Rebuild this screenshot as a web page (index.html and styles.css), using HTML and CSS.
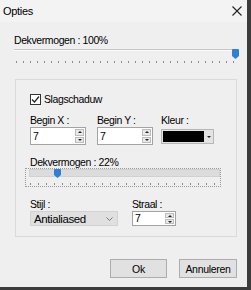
FILE: index.html
```html
<!DOCTYPE html>
<html lang="nl">
<head>
    <meta charset="UTF-8">
    <title>Opties</title>
    <link rel="stylesheet" href="styles.css">
</head>
<body>
    <div class="window">
        <div class="titlebar">
            <span>Opties</span>
            <svg class="close" width="10" height="10" viewBox="0 0 10 10">
                <path d="M0.5 0.5L9.5 9.5M9.5 0.5L0.5 9.5" stroke="#222" stroke-width="1.1"/>
            </svg>
        </div>
        <div class="content">
            <div class="label">Dekvermogen : 100%</div>
            <div class="slider-main">
                <div class="line"></div>
                <svg class="thumb" style="left: 218px" width="7" height="10" viewBox="0 0 7 10">
                    <path d="M0 1Q0 0 1 0H6Q7 0 7 1V7L3.5 10L0 7Z" fill="#2f7fd4"/>
                </svg>
                <div class="ticks"></div>
            </div>

            <div class="group">
                <div class="check-row">
                    <span class="checkbox">
                        <svg width="9" height="9" viewBox="0 0 9 9">
                            <path d="M1 4.5L3.5 7L8 1.5" stroke="#222" stroke-width="1.2" fill="none"/>
                        </svg>
                    </span>
                    <span>Slagschaduw</span>
                </div>

                <div class="fields">
                    <div class="field">
                        <div class="label">Begin X :</div>
                        <div class="spin">
                            <span class="spin-value">7</span>
                            <span class="spin-btns"><span class="up"></span><span class="down"></span></span>
                        </div>
                    </div>
                    <div class="field">
                        <div class="label">Begin Y :</div>
                        <div class="spin">
                            <span class="spin-value">7</span>
                            <span class="spin-btns"><span class="up"></span><span class="down"></span></span>
                        </div>
                    </div>
                    <div class="field">
                        <div class="label">Kleur :</div>
                        <div class="color-combo">
                            <span class="swatch"></span>
                            <span class="drop"></span>
                        </div>
                    </div>
                </div>

                <div class="label label-opacity">Dekvermogen : 22%</div>
                <div class="slider-inner">
                    <div class="bar"></div>
                    <svg class="thumb" style="left: 28px" width="7" height="9" viewBox="0 0 7 9">
                        <path d="M0 1Q0 0 1 0H6Q7 0 7 1V6L3.5 9L0 6Z" fill="#2f7fd4"/>
                    </svg>
                    <div class="ticks"></div>
                </div>

                <div class="fields fields-bottom">
                    <div class="field">
                        <div class="label">Stijl :</div>
                        <div class="select">
                            <span>Antialiased</span>
                            <svg width="7" height="4" viewBox="0 0 7 4">
                                <path d="M0.5 0.5L3.5 3.5L6.5 0.5" stroke="#777" fill="none"/>
                            </svg>
                        </div>
                    </div>
                    <div class="field">
                        <div class="label">Straal :</div>
                        <div class="spin spin-small">
                            <span class="spin-value">7</span>
                            <span class="spin-btns"><span class="up"></span><span class="down"></span></span>
                        </div>
                    </div>
                </div>
            </div>
        </div>

        <div class="buttons">
            <button class="btn btn-ok">Ok</button>
            <button class="btn btn-cancel">Annuleren</button>
        </div>
    </div>
</body>
</html>
```

FILE: styles.css
```css
* {
    margin: 0;
    padding: 0;
    box-sizing: border-box;
}
body {
    background: #3c3c3c;
    font-family: "Liberation Sans", Arial, sans-serif;
    font-size: 10.5px;
    letter-spacing: -0.4px;
    color: #000;
}
.window {
    width: 247px;
    height: 287px;
    background: #efefef;
    display: flex;
    flex-direction: column;
}
.titlebar {
    height: 22px;
    background: #f3f3f3;
    display: flex;
    align-items: center;
    justify-content: space-between;
    padding: 0 5px 0 3px;
    font-size: 11px;
    letter-spacing: -0.3px;
}
.content {
    padding: 12px 0 0 14px;
}
.label {
    height: 13px;
    line-height: 13px;
    white-space: nowrap;
}
.slider-main {
    position: relative;
    width: 224px;
    height: 16px;
}
.slider-main .line {
    margin-top: 2px;
    height: 2px;
    background: #c6c6c6;
    border-bottom: 1px solid #fbfbfb;
}
.thumb {
    position: absolute;
    top: 0;
}
.slider-main .ticks {
    margin: 10px 0 0 2px;
    width: 221px;
    height: 2px;
    background: repeating-linear-gradient(90deg, #8c8c8c 0 1px, transparent 1px 7px);
}
.group {
    margin: 14px 0 0 1px;
    width: 222px;
    height: 158px;
    border: 1px solid #dadada;
    padding: 13px 0 0 14px;
}
.check-row {
    height: 12px;
    display: flex;
    align-items: center;
    gap: 3px;
}
.checkbox {
    width: 11px;
    height: 11px;
    border: 1px solid #333;
    background: #fff;
    display: flex;
    align-items: center;
    justify-content: center;
}
.fields {
    margin-top: 9px;
    display: grid;
    grid-template-columns: 67px 64px 53px;
}
.field .label {
    height: 13px;
}
.spin {
    width: 56px;
    height: 18px;
    border: 1px solid #a3a3a3;
    background: #fff;
    display: flex;
}
.spin-value {
    flex: 1;
    padding-left: 2px;
    line-height: 16px;
}
.spin-btns {
    width: 9px;
    margin: 1px 1px 1px 0;
    display: flex;
    flex-direction: column;
    gap: 1px;
}
.spin-btns span {
    flex: 1;
    border: 1px solid #bdbdbd;
    background: #e9e9e9;
    display: flex;
    align-items: center;
    justify-content: center;
}
.spin-btns .up::after {
    content: "";
    border-left: 2px solid transparent;
    border-right: 2px solid transparent;
    border-bottom: 2px solid #222;
}
.spin-btns .down::after {
    content: "";
    border-left: 2px solid transparent;
    border-right: 2px solid transparent;
    border-top: 2px solid #222;
}
.color-combo {
    width: 53px;
    height: 15px;
    margin-top: 2px;
    border: 1px solid #b7b7b7;
    background: #e3e3e3;
    display: flex;
}
.swatch {
    flex: 1;
    background: #000;
    margin: 1px;
}
.drop {
    width: 8px;
    display: flex;
    align-items: center;
    justify-content: center;
}
.drop::after {
    content: "";
    border-left: 2px solid transparent;
    border-right: 2px solid transparent;
    border-top: 2px solid #222;
}
.label-opacity {
    margin-top: 11px;
    height: 12px;
    line-height: 12px;
}
.slider-inner {
    position: relative;
    margin-left: -5px;
    width: 196px;
    height: 19px;
    border: 1px dotted #9a9a9a;
}
.slider-inner .bar {
    margin-left: 3px;
    width: 191px;
    height: 8px;
    background: #dcdcdc;
    border: 1px solid #d0d0d0;
}
.slider-inner .ticks {
    margin: 6px 0 0 4px;
    width: 186px;
    height: 2px;
    background: repeating-linear-gradient(90deg, #8c8c8c 0 1px, transparent 1px 8px);
}
.fields-bottom {
    margin-top: 11px;
    grid-template-columns: 102px 44px;
}
.select {
    width: 88px;
    height: 15px;
    background: #e0e0e0;
    border: 1px solid #d2d2d2;
    display: flex;
    align-items: center;
    justify-content: space-between;
    padding: 0 4px 0 3px;
    font-size: 11.5px;
}
.spin-small {
    width: 44px;
    height: 15px;
}
.spin-small .spin-value {
    line-height: 13px;
}
.buttons {
    margin-top: 22px;
    display: flex;
    justify-content: flex-end;
    gap: 12px;
    padding-right: 10px;
}
.btn {
    height: 19px;
    background: #e1e1e1;
    border: 1px solid #adadad;
    font-family: inherit;
    font-size: 10.5px;
    letter-spacing: -0.3px;
    color: #000;
}
.btn-ok {
    width: 57px;
}
.btn-cancel {
    width: 58px;
}
```
